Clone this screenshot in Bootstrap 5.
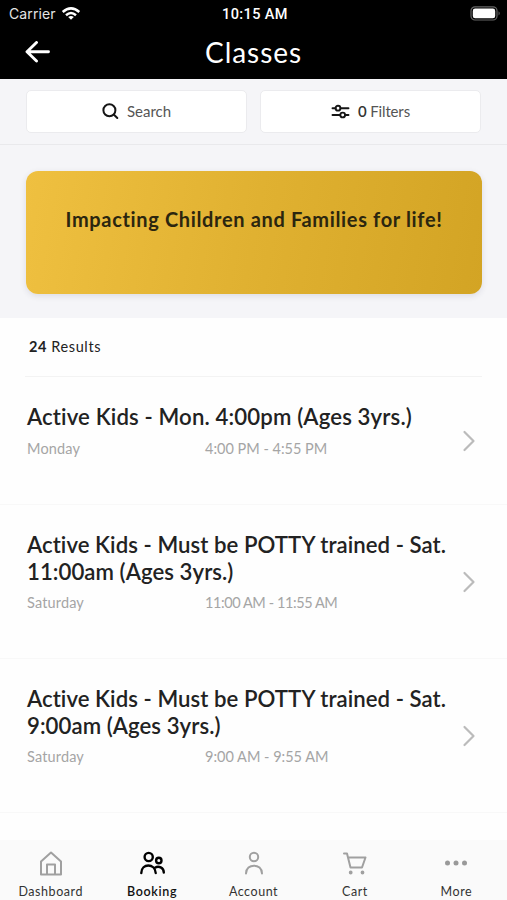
<!DOCTYPE html>
<html lang="en">
<head>
<meta charset="utf-8">
<meta name="viewport" content="width=device-width, initial-scale=1">
<title>Classes</title>
<link href="https://cdn.jsdelivr.net/npm/bootstrap@5.3.0/dist/css/bootstrap.min.css" rel="stylesheet">
<style>
body{font-family:Lato,"Noto Sans",sans-serif;color:#222;background:#fefefe}
.screen{height:900px}
.status-bar{height:27px;font:500 14px/27px Inter,sans-serif;padding:0 6px 0 9px}
.status-bar>*{flex:1 1 0}
.carrier{font-weight:400;color:#e4e4e4;letter-spacing:.1px}
.clock{font-family:Roboto,sans-serif;font-weight:500;font-size:14.5px;letter-spacing:.4px;padding-top:1px}
.title-bar{height:52px;padding:0 25px}
.title-bar h1{font-size:28px;line-height:50px;letter-spacing:.95px;font-weight:400;padding-bottom:2px}
.title-bar>*{flex:1 1 0}
.title-bar .heading-text{flex:0 0 auto}
.back-link{padding-bottom:2px}
.tool-strip{height:66px;background:#f5f5f8;border-bottom:1px solid #e9e9ec;padding:11px 26px 0;gap:13px}
.tool-btn{height:43px;background:#fff;border:1px solid #ebebee;border-radius:5px;font-size:15px;color:#555;flex:1 1 0;padding:0}
.tool-btn b{font-weight:600;color:#333}
.tool-btn .filter-label{letter-spacing:-.15px}
.tool-btn svg{color:#151515}
.hero{height:173px;background:#f5f5f8;padding:26px 25px 0 26px}
.promo{height:123px;border-radius:12px;background:linear-gradient(100deg,#efc040,#e0b131 50%,#d3a424);box-shadow:0 2px 6px rgba(40,40,80,.12);padding-top:35px}
.promo p{font-size:20px;font-weight:700;line-height:27px;letter-spacing:.65px;color:#2b260f;white-space:nowrap}
.results{height:59px;margin:0 25px;border-bottom:1px solid #f3f3f3;padding:0 4px;font-size:14.5px;line-height:58px;letter-spacing:.6px}
.class-row{border-bottom:1px solid #f8f8f8;padding:26px 31px 0 27px;color:inherit;text-decoration:none}
.class-row h2{font-size:22.2px;line-height:27px;font-weight:600;letter-spacing:.13px;white-space:nowrap}
.class-row .long-name{letter-spacing:.05px}
.short-row{height:128px}.tall-row{height:154px}
.meta{font-size:14.5px;line-height:20px;color:#a5a5a5;margin-top:9px}
.meta span:first-child{width:178px;letter-spacing:.15px}
.meta .narrow-time{letter-spacing:-.42px}
.tall-row .meta{margin-top:8px}
.chev{margin-bottom:26px;color:#bbb}
.tab-strip{height:60px;background:#fafafa}
.tab-strip a{flex:1 1 0;color:#333;font-size:12.5px;line-height:16px;letter-spacing:.55px;padding-top:9px;text-decoration:none}
.tab-strip svg{margin-bottom:6px;color:#a0a0a0}
.tab-strip a.current{color:#111;font-weight:600;letter-spacing:.7px}
.tab-strip a.current svg{color:#000}
svg{display:block;fill:none;stroke:currentColor;stroke-linecap:round;stroke-linejoin:round}
</style>
</head>
<body>
<div class="screen d-flex flex-column overflow-hidden">
  <header class="bg-black text-white">
    <div class="status-bar d-flex align-items-center">
      <div class="d-flex align-items-center carrier"><span>Carrier</span>
        <svg class="ms-1 text-white" width="22" height="16" viewBox="0 0 22 16" stroke-width="2.5"><path d="M2.7 6Q11-1.2 19.3 6M6 9.2Q11 4.8 16 9.2" stroke-linecap="butt"/><path d="M11 13.8L8.2 11Q11 9 13.8 11Z" fill="#fff" stroke="none"/></svg>
      </div>
      <div class="text-center clock"><span>10:15 AM</span></div>
      <div class="d-flex justify-content-end"><svg width="31" height="15" viewBox="0 0 31 15"><rect x="1" y=".8" width="26" height="13.2" rx="4" style="stroke:#666" stroke-width="1.2"/><rect x="2.8" y="2.6" width="22.4" height="9.6" rx="2.3" fill="#fff" stroke="none"/><path d="M28.6 5.3q2 2.1 0 4.2z" fill="#777" stroke="none"/></svg></div>
    </div>
    <div class="title-bar d-flex align-items-center">
      <a href="#" class="text-white back-link" aria-label="Back"><svg width="26" height="22" viewBox="0 0 26 22" stroke-width="2.9"><path d="M11.5 1.5L2 10.8L11.5 20M2.5 10.8H23.5"/></svg></a>
      <h1 class="heading-text mb-0"><span>Classes</span></h1>
      <span></span>
    </div>
  </header>
  <div class="tool-strip d-flex">
    <button class="btn tool-btn d-flex align-items-center justify-content-center"><svg class="me-2" width="17" height="17" viewBox="0 0 17 17" stroke-width="2"><circle cx="7.4" cy="7.3" r="6"/><path d="M12 11.8L15.3 15"/></svg><span>Search</span></button>
    <button class="btn tool-btn d-flex align-items-center justify-content-center"><svg class="me-2" width="19" height="15" viewBox="0 0 19 15" stroke-width="1.9"><path d="M1.5 4.2H4.5M9.7 4.2H17.5M1.5 11H9M14.2 11H17.5"/><circle cx="7" cy="4.2" r="2.4"/><circle cx="11.7" cy="11" r="2.4"/></svg><span class="filter-label"><b>0</b> Filters</span></button>
  </div>
  <section class="hero"><div class="promo text-center"><p class="mb-0"><span>Impacting Children and Families for life!</span></p></div></section>
  <main class="flex-grow-1 overflow-hidden">
    <div class="results"><b>24</b> Results</div>
    <a href="#" class="class-row short-row d-flex justify-content-between">
      <div><h2 class="mb-0">Active Kids - Mon. 4:00pm (Ages 3yrs.)</h2><div class="meta d-flex"><span>Monday</span><span>4:00 PM - 4:55 PM</span></div></div>
      <svg class="chev align-self-center" width="14" height="22" viewBox="0 0 14 22" stroke-width="2.2"><path d="M2.5 2L11.5 11L2.5 20"/></svg>
    </a>
    <a href="#" class="class-row tall-row d-flex justify-content-between">
      <div><h2 class="mb-0 long-name">Active Kids - Must be POTTY trained - Sat.<br>11:00am (Ages 3yrs.)</h2><div class="meta d-flex"><span>Saturday</span><span class="narrow-time">11:00 AM - 11:55 AM</span></div></div>
      <svg class="chev align-self-center" width="14" height="22" viewBox="0 0 14 22" stroke-width="2.2"><path d="M2.5 2L11.5 11L2.5 20"/></svg>
    </a>
    <a href="#" class="class-row tall-row d-flex justify-content-between">
      <div><h2 class="mb-0 long-name">Active Kids - Must be POTTY trained - Sat.<br>9:00am (Ages 3yrs.)</h2><div class="meta d-flex"><span>Saturday</span><span>9:00 AM - 9:55 AM</span></div></div>
      <svg class="chev align-self-center" width="14" height="22" viewBox="0 0 14 22" stroke-width="2.2"><path d="M2.5 2L11.5 11L2.5 20"/></svg>
    </a>
  </main>
  <nav class="tab-strip d-flex">
    <a href="#" class="d-flex flex-column align-items-center"><svg width="28" height="29" viewBox="0 0 28 29" stroke-width="2"><path d="M4 12.5L14 3.5L24 12.5V25.5H4ZM10 25.5V15.5H18V25.5"/></svg><span>Dashboard</span></a>
    <a href="#" class="current d-flex flex-column align-items-center"><svg width="28" height="29" viewBox="0 0 28 29" stroke-width="2.4"><circle cx="10.7" cy="8" r="4.1"/><circle cx="20.8" cy="11.5" r="2.7"/><path d="M3.3 24C3.5 14 17 14 17.7 24M17 18.8C20.5 16.5 25.8 18.5 25.8 23.5"/></svg><span>Booking</span></a>
    <a href="#" class="d-flex flex-column align-items-center"><svg width="28" height="29" viewBox="0 0 28 29" stroke-width="2"><circle cx="14" cy="8" r="4.2"/><path d="M6 24.5C6 14 22 14 22 24.5"/></svg><span>Account</span></a>
    <a href="#" class="d-flex flex-column align-items-center"><svg width="28" height="29" viewBox="0 0 28 29" stroke-width="2"><path d="M3 4.5H6L9.5 18.5H21L24.5 8.5H7"/><circle cx="9.7" cy="23.5" r=".9" fill="currentColor"/><circle cx="21.5" cy="23.5" r=".9" fill="currentColor"/></svg><span>Cart</span></a>
    <a href="#" class="d-flex flex-column align-items-center"><svg width="28" height="29" viewBox="0 0 28 29"><g fill="#999" style="stroke:none"><circle cx="5.5" cy="14" r="2.5"/><circle cx="14" cy="14" r="2.5"/><circle cx="22.5" cy="14" r="2.5"/></g></svg><span>More</span></a>
  </nav>
</div>
<script src="https://cdn.jsdelivr.net/npm/bootstrap@5.3.0/dist/js/bootstrap.bundle.min.js"></script>
</body>
</html>
